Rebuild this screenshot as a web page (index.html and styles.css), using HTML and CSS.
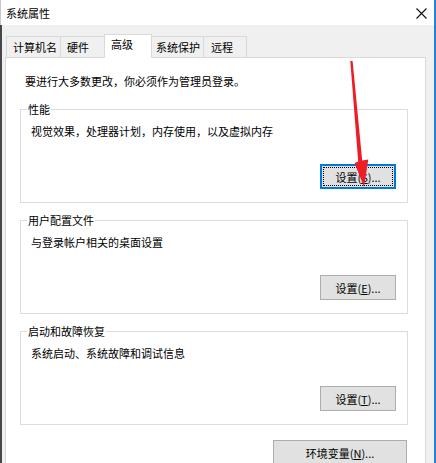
FILE: index.html
```html
<!DOCTYPE html>
<html lang="zh-CN">
<head>
<meta charset="utf-8">
<title>系统属性</title>
<link rel="stylesheet" href="styles.css">
</head>
<body>
<div class="window">
  <div class="titlebar">
    <span class="title">系统属性</span>
    <span class="close">
      <svg width="11" height="11" viewBox="0 0 11 11"><path d="M0.5 0.5 L10.5 10.5 M10.5 0.5 L0.5 10.5" stroke="#111" stroke-width="1.1" fill="none"/></svg>
    </span>
  </div>
  <div class="body">
    <div class="tabs">
      <div class="tab tab-1">计算机名</div>
      <div class="tab tab-2">硬件</div>
      <div class="tab tab-active">高级</div>
      <div class="tab tab-4">系统保护</div>
      <div class="tab tab-5">远程</div>
    </div>
    <div class="panel">
      <p class="intro">要进行大多数更改，你必须作为管理员登录。</p>
      <fieldset class="group">
        <legend>性能</legend>
        <p class="desc">视觉效果，处理器计划，内存使用，以及虚拟内存</p>
        <div class="btn-row"><button class="btn btn-default">设置(<u>S</u>)...</button></div>
      </fieldset>
      <fieldset class="group">
        <legend>用户配置文件</legend>
        <p class="desc">与登录帐户相关的桌面设置</p>
        <div class="btn-row"><button class="btn">设置(<u>E</u>)...</button></div>
      </fieldset>
      <fieldset class="group">
        <legend>启动和故障恢复</legend>
        <p class="desc">系统启动、系统故障和调试信息</p>
        <div class="btn-row"><button class="btn">设置(<u>T</u>)...</button></div>
      </fieldset>
      <div class="env-row"><button class="btn btn-wide">环境变量(<u>N</u>)...</button></div>
    </div>
  </div>
  <svg class="arrow" width="436" height="463" viewBox="0 0 436 463">
    <polygon points="350.3,61 352.6,61 362.2,160.5 368.3,159.5 364,187 354.6,163 358.2,161.5" fill="#ee1c25"/>
  </svg>
</div>
</body>
</html>
```

FILE: styles.css
```css
html, body {
  margin: 0;
  padding: 0;
}

body {
  width: 436px;
  height: 463px;
  overflow: hidden;
  font-family: "Noto Sans CJK SC", "Microsoft YaHei", sans-serif;
  font-size: 11px;
  color: #000;
}

.window {
  position: relative;
  width: 436px;
  height: 463px;
  box-sizing: border-box;
  border-right: 2px solid #2b7fd4;
  display: flex;
  flex-direction: column;
  overflow: hidden;
}

.titlebar {
  height: 25px;
  flex: none;
  background: #fff;
  border-left: 1px solid #c8c8c8;
  display: flex;
  align-items: center;
  justify-content: space-between;
  padding: 0 7px 0 5px;
}

.title {
  line-height: 14px;
  margin-top: 1px;
}

.close {
  display: flex;
  margin-top: 1px;
}

.body {
  flex: 1;
  background: #f0f0f0;
  border-left: 2px solid #474747;
  display: flex;
  flex-direction: column;
}

.tabs {
  display: flex;
  align-items: flex-end;
  height: 23px;
  margin-top: 9px;
  padding-left: 4px;
  flex: none;
}

.tab {
  box-sizing: border-box;
  height: 21px;
  margin-left: -1px;
  padding: 3px 0 0 6px;
  line-height: 14px;
  background: #f0f0f0;
  border: 1px solid #d9d9d9;
  border-bottom: none;
  white-space: nowrap;
}

.tab-1 { width: 55px; margin-left: 0; }
.tab-2 { width: 45px; }
.tab-4 { width: 53px; padding-left: 4px; }
.tab-5 { width: 44px; padding-left: 7px; }

.tab-active {
  width: 48px;
  height: 24px;
  margin-bottom: -1px;
  padding: 2px 0 0 6px;
  background: #fff;
  position: relative;
  z-index: 1;
}

.panel {
  flex: 1;
  width: 421px;
  box-sizing: border-box;
  margin-left: 3px;
  background: #fff;
  border: 1px solid #d9d9d9;
  padding: 16px 17px 0 14px;
}

.intro {
  margin: 0;
  padding-left: 5px;
  line-height: 14px;
}

.group {
  margin: 14px 0 0 0;
  padding: 0 11px 13px 0;
  border: 1px solid #dcdcdc;
  min-inline-size: 0;
}

.group + .group {
  margin-top: 10px;
}

.group legend {
  margin-left: 6px;
  padding: 0 1px;
  line-height: 14px;
}

.desc {
  margin: 8px 0 0 10px;
  line-height: 14px;
}

.btn-row {
  display: flex;
  justify-content: flex-end;
  margin-top: 26px;
}

.btn {
  box-sizing: border-box;
  width: 76px;
  height: 25px;
  padding: 0;
  margin: 0;
  background: #e1e1e1;
  border: 1px solid #adadad;
  border-radius: 0;
  font-family: inherit;
  font-size: 11px;
  line-height: 14px;
  color: #000;
}

.btn u {
  text-decoration: underline;
  text-underline-offset: 1px;
}

.btn-default {
  border-color: #0078d7;
  box-shadow: inset 0 0 0 1px #0078d7;
  outline: 1px dotted #000;
  outline-offset: -4px;
}

.env-row {
  display: flex;
  justify-content: flex-end;
  margin-top: 15px;
  padding-right: 1px;
}

.btn-wide {
  width: 134px;
}

.arrow {
  position: absolute;
  left: 0;
  top: 0;
  pointer-events: none;
  z-index: 5;
}
```
